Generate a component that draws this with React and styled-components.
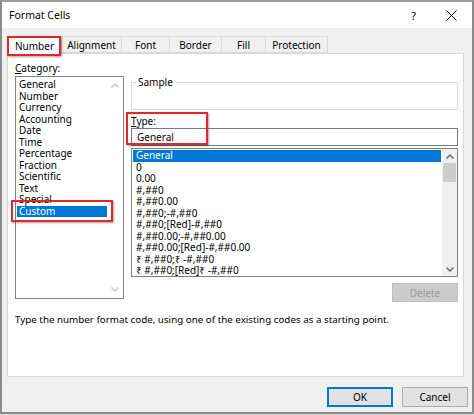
import React from 'react';
import styled, { createGlobalStyle } from 'styled-components';

const Global = createGlobalStyle`
  html, body { margin: 0; padding: 0; width: 474px; height: 415px; overflow: hidden; background: #d6d6d6; }
  body { font-family: "Noto Sans", "Open Sans", sans-serif; font-size: 10px; color: #000; }
  * { box-sizing: border-box; }
`;

const Dialog = styled.div`
  width: 474px;
  height: 414px;
  border: 2px solid #8b8b8b;
  border-top-color: #9c9c9c;
  background: #f0f0f0;
  display: flex;
  flex-direction: column;
`;

const TitleBar = styled.div`
  height: 26px;
  background: #fff;
  display: flex;
  align-items: center;
  padding: 0 15px 0 7px;
`;

const Title = styled.div`
  flex: 1;
  font-size: 10.5px;
`;

const Help = styled.span`
  font-size: 11px;
  margin-right: 30px;
`;

const TabsRow = styled.div`
  margin-top: 8px;
  height: 17px;
  padding-left: 6px;
  display: flex;
  align-items: flex-start;
`;

const Tab = styled.div`
  position: relative;
  width: ${p => p.$w}px;
  height: ${p => (p.$active ? 18 : 17)}px;
  margin-bottom: ${p => (p.$active ? -1 : 0)}px;
  z-index: ${p => (p.$active ? 1 : 0)};
  background: ${p => (p.$active ? '#fff' : '#f0f0f0')};
  border: 1px solid #d9d9d9;
  border-bottom: ${p => (p.$active ? 'none' : '1px solid #d9d9d9')};
  margin-left: -1px;
  display: flex;
  align-items: center;
  justify-content: center;
  line-height: 1;
`;

const RedMark = styled.div`
  position: absolute;
  top: ${p => p.$top}px;
  left: ${p => p.$left}px;
  width: ${p => p.$w}px;
  height: ${p => p.$h}px;
  border: 2px solid #e3262c;
  box-shadow: 1px 1px 2px rgba(0, 0, 0, 0.35);
  pointer-events: none;
  z-index: 3;
`;

const Panel = styled.div`
  margin: 0 8px 0 5px;
  height: 324px;
  background: #fff;
  border: 1px solid #d9d9d9;
  padding: 8px 5px 0 7px;
  display: grid;
  grid-template-columns: 109px 327px;
  column-gap: 7px;
  align-content: start;
`;

const Column = styled.div`
  position: relative;
  display: flex;
  flex-direction: column;
`;

const Label = styled.div`
  line-height: 12px;
  height: 12px;
  margin-top: ${p => p.$mt || 0}px;
`;

const ListBox = styled.div`
  position: relative;
  margin-top: ${p => p.$mt || 0}px;
  height: ${p => p.$h}px;
  border: 1px solid #828282;
  display: flex;
  background: #fff;
`;

const Items = styled.div`
  flex: 1;
  padding: ${p => p.$pt}px 0 0 1px;
  overflow: hidden;
`;

const Item = styled.div`
  height: 11.5px;
  line-height: 11.5px;
  padding-left: ${p => p.$pl}px;
  white-space: nowrap;
  background: ${p => (p.$sel ? '#0078d7' : 'transparent')};
  color: ${p => (p.$sel ? '#fff' : '#000')};
  margin-right: ${p => p.$mr || 0}px;
`;

const ScrollBar = styled.div`
  width: ${p => p.$w}px;
  background: ${p => p.$bg};
  display: flex;
  flex-direction: column;
`;

const ArrowBox = styled.div`
  height: ${p => p.$h}px;
  display: flex;
  align-items: center;
  justify-content: center;
`;

const Track = styled.div`
  flex: 1;
  padding: 0 1px;
`;

const Thumb = styled.div`
  height: 19px;
  background: #cdcdcd;
`;

const Sample = styled.fieldset`
  margin: 14px 0 0 0;
  padding: 0;
  height: 34px;
  border: 1px solid #dcdcdc;
  min-width: 0;
`;

const Legend = styled.legend`
  margin-left: 4px;
  padding: 0 2px;
  line-height: 12px;
  font-size: 10px;
`;

const TypeInput = styled.div`
  margin-top: 1px;
  height: 18px;
  border: 1px solid #7a7a7a;
  padding-left: 5px;
  display: flex;
  align-items: center;
`;

const Button = styled.div`
  width: 66px;
  height: ${p => p.$h || 20}px;
  display: flex;
  align-items: center;
  justify-content: center;
  background: ${p => (p.$disabled ? '#cccccc' : '#e1e1e1')};
  color: ${p => (p.$disabled ? '#9b9b9b' : '#000')};
  border: 1px solid ${p => (p.$primary ? '#0078d7' : p.$disabled ? '#bfbfbf' : '#adadad')};
  box-shadow: ${p => (p.$primary ? 'inset 0 0 0 1px #0078d7' : 'none')};
`;

const DeleteRow = styled.div`
  margin-top: 6px;
  display: flex;
  justify-content: flex-end;
`;

const Description = styled.div`
  grid-column: 1 / -1;
  margin-top: 12px;
  line-height: 12px;
  font-size: 9.8px;
`;

const Footer = styled.div`
  margin-top: 10px;
  display: flex;
  justify-content: flex-end;
  gap: 9px;
  padding-right: 4px;
`;

const Chevron = ({ up, color }) => (
  <svg width="8" height="5" viewBox="0 0 8 5">
    <polyline
      points={up ? '0.5,4.5 4,1 7.5,4.5' : '0.5,0.5 4,4 7.5,0.5'}
      fill="none"
      stroke={color}
      strokeWidth="1.3"
    />
  </svg>
);

const CloseIcon = () => (
  <svg width="11" height="11" viewBox="0 0 11 11">
    <path d="M0.5 0.5 L10.5 10.5 M10.5 0.5 L0.5 10.5" stroke="#000" strokeWidth="1" fill="none" />
  </svg>
);

const tabs = [
  { label: 'Number', w: 55, active: true },
  { label: 'Alignment', w: 61 },
  { label: 'Font', w: 49 },
  { label: 'Border', w: 53 },
  { label: 'Fill', w: 45 },
  { label: 'Protection', w: 63 },
];

const categories = [
  'General', 'Number', 'Currency', 'Accounting', 'Date', 'Time', 'Percentage',
  'Fraction', 'Scientific', 'Text', 'Special', 'Custom',
];

const formats = [
  'General', '0', '0.00', '#,##0', '#,##0.00', '#,##0;-#,##0', '#,##0;[Red]-#,##0',
  '#,##0.00;-#,##0.00', '#,##0.00;[Red]-#,##0.00', '₹ #,##0;₹ -#,##0', '₹ #,##0;[Red]₹ -#,##0',
];

export default function App() {
  return (
    <>
      <Global />
      <Dialog>
        <TitleBar>
          <Title>Format Cells</Title>
          <Help>?</Help>
          <CloseIcon />
        </TitleBar>
        <TabsRow>
          {tabs.map(t => (
            <Tab key={t.label} $w={t.w} $active={t.active}>
              {t.label}
              {t.active && <RedMark $top={-1} $left={-1} $w={54} $h={20} />}
            </Tab>
          ))}
        </TabsRow>
        <Panel>
          <Column>
            <Label><u>C</u>ategory:</Label>
            <ListBox $mt={2} $h={223}>
              <Items $pt={2}>
                {categories.map(c => (
                  <Item key={c} $pl={2} $sel={c === 'Custom'}>{c}</Item>
                ))}
              </Items>
              <ScrollBar $w={16} $bg="#fff">
                <ArrowBox $h={17}><Chevron up color="#c2c2c2" /></ArrowBox>
                <Track />
                <ArrowBox $h={17}><Chevron color="#c2c2c2" /></ArrowBox>
              </ScrollBar>
              <RedMark $top={123} $left={-5} $w={102} $h={22} />
            </ListBox>
          </Column>
          <Column>
            <Sample>
              <Legend>Sample</Legend>
            </Sample>
            <Label $mt={5}><u>T</u>ype:</Label>
            <TypeInput>General</TypeInput>
            <ListBox $mt={2} $h={129}>
              <Items $pt={1}>
                {formats.map((f, i) => (
                  <Item key={f} $pl={3} $mr={1} $sel={i === 0}>{f}</Item>
                ))}
              </Items>
              <ScrollBar $w={15} $bg="#f0f0f0">
                <ArrowBox $h={14}><Chevron up color="#606060" /></ArrowBox>
                <Track><Thumb /></Track>
                <ArrowBox $h={14}><Chevron color="#606060" /></ArrowBox>
              </ScrollBar>
            </ListBox>
            <DeleteRow>
              <Button $disabled $h={19}>Delete</Button>
            </DeleteRow>
            <RedMark $top={50} $left={-5} $w={82} $h={33} />
          </Column>
          <Description>
            Type the number format code, using one of the existing codes as a starting point.
          </Description>
        </Panel>
        <Footer>
          <Button $primary>OK</Button>
          <Button>Cancel</Button>
        </Footer>
      </Dialog>
    </>
  );
}
